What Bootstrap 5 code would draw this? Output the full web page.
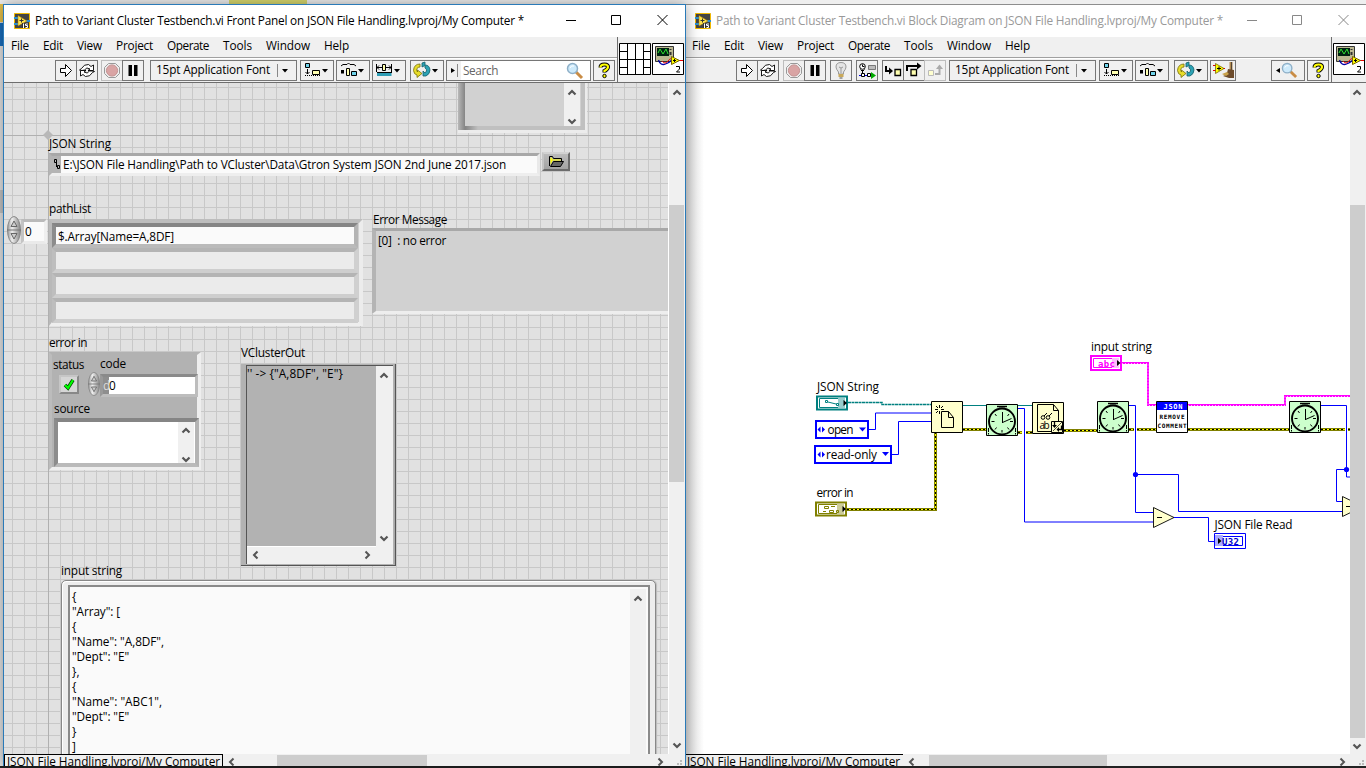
<!DOCTYPE html>
<html lang="en">
<head>
<meta charset="utf-8">
<meta name="viewport" content="width=device-width, initial-scale=1">
<title>Path to Variant Cluster Testbench.vi</title>
<link href="https://cdn.jsdelivr.net/npm/bootstrap@5.3.0/dist/css/bootstrap.min.css" rel="stylesheet">
<style>
html,body{height:100%;overflow:hidden}
body{font:11.8px/15px "Open Sans","Noto Sans",sans-serif;color:#000;background:#efefef;width:1366px;height:768px}
svg{display:block;flex:none}
svg text{font-family:"Open Sans","Noto Sans",sans-serif;font-size:11.8px;fill:#000}
[data-w]{display:inline-block;white-space:pre;flex:none}
.desktop{height:766px;background:linear-gradient(#d9d96f,#d9d96f) 229px 0/78px 4px no-repeat,#efefef}
.strip{width:3px;background:linear-gradient(#e9c24a 0 18px,#d8d8d8 18px 19px,#1a6fbf 19px 42px,#e4e4e4 42px 186px,#c4c4c4 186px 209px,#e4e4e4 209px)}
.taskbar{height:2px;background:#222}
.win-front{width:683px;border:1px solid #2a7ab8;border-bottom:0;z-index:2;box-shadow:0 0 14px rgba(0,0,0,.38)}
.win-back{width:680px;border-top:1px solid #8e8e8e}
.titlebar{height:32px;background:#fff;padding-left:10px}
.titlebar .caption-txt{margin-left:5px;margin-top:-2px}
.titlebar .lvicon{margin-top:-1px}
.win-back .titlebar{padding-left:9px;color:#999}
.bars{height:46px;background:#f0f0f0;border-bottom:1px solid #6e6e6e}
.menus{height:21px;gap:14px;padding-left:7px;padding-bottom:4px;border-bottom:1px solid #a0a0a0;box-shadow:0 1px #fff}
.win-back .menus{padding-left:6px}
.tools{height:24px;padding-top:2px}
.tb{height:21px;width:22px;border:1px solid #767676;background:#f0f0f0;padding:0;display:flex;align-items:center;margin-right:-1px}
.tb.dim{border-color:#bdbdbd}
.tb.w34{width:34px}.tb.w26{width:26px}
.fontbox{width:147px;padding-left:5px}
.fontbox span{margin-top:-2px}
.searchbox{width:145px;color:#666;background:#fff}
.iconpane{border-left:1px solid #6e6e6e;padding:6px 0 0 1px;gap:1px}
.panel{width:664px;background-color:#e1e1e1;background-image:linear-gradient(#b0b0b0,#b0b0b0),linear-gradient(#b0b0b0,#b0b0b0),linear-gradient(90deg,#c8c8c8 1px,transparent 1px),linear-gradient(#c8c8c8 1px,transparent 1px);background-size:1px 100%,100% 1px,12px 12px,12px 12px;background-position:44px 0,0 52px,8px 4px,8px 4px;background-repeat:no-repeat,no-repeat,repeat,repeat}
.workarea{height:671px}
.origin{position:absolute;left:-4px;top:-83px;width:700px;height:768px}
.origin>*{position:absolute}
.vbar{width:17px;border-left:1px solid #fff;background:#f0f0f0}
.win-back .vbar{border-left:0}
.vbar .track{padding-top:6px}
.thumb1{height:277px;margin-top:109px;width:15px;background:#cdcdcd}
.thumb2{height:533px;margin-top:109px;width:15px;background:#cdcdcd}
.statusbar{height:12px;background:#f0f0f0;overflow:hidden}
.status-name{border:1px solid #000;border-bottom:0;height:16px;width:219px;padding-left:2px;line-height:13px}
.win-back .status-name{width:217px;border-left:0;border-right:0;padding-left:1px}
.hthumb{height:12px;background:#cdcdcd;margin-top:1px}
/* front panel controls */
.bevel{border:3px solid;border-color:#a8a8a8 #e9e9e9 #eeeeee #b4b4b4}
.dark{border:4px solid;border-color:#858585 #b4b4b4 #bababa #8c8c8c}
.ro{border:4px solid;border-color:#b4b4b4 #d0d0d0 #cecece #bebebe;background:#ebebeb}
.o-topbox{left:458px;top:60px;width:127px;height:70px;border:solid;border-width:5px 4px 4px 7px;border-color:#999 #bdbdbd #c6c6c6 #969696;border-image:linear-gradient(90deg,#b8b8b8,#858585 7px,#c0c0c0 20px) 5 4 4 7;background:#d1d1d1;box-shadow:1px 2px 0 1px #ececec}
.sb{background:#f0f0f0;width:16px}
.o-path{left:49px;top:153px;width:491px;height:23px;background:#fafafa}
.o-path .glyph{width:9px;height:17px;background:#b4b4b4}
.o-browse{left:542px;top:152px;width:28px;height:19px;border:2px solid;border-color:#d2d2d2 #6c6c6c #6c6c6c #c4c4c4;background:linear-gradient(#bbb,#a3a3a3);padding:0}
.o-index{left:21px;top:219px;width:26px;height:25px;border-color:#bababa #efefef #eaeaea #c4c4c4;background:#fafafa;padding-left:1px;line-height:19px}
.o-spin1{left:7px;top:216px}
.o-array{left:49px;top:219px;width:314px;height:107px;border-color:#bdbdbd #ececec #eee #b9b9b9;background:#cfcfcf;border-width:4px 4px 4px 3px}
.o-array .cell{height:25px}
.o-array .cell{margin-right:1px}
.o-array .dark{background:#fafafa;line-height:18px}
.o-errmsg{left:372px;top:228px;width:320px;height:86px;background:#d1d1d1;border-left-width:4px;padding:2px}
.o-cluster{left:49px;top:352px;width:152px;height:118px;background:#b2b2b2;border-color:#b2b2b2 #eee #eee #bcbcbc;border-right-width:4px}
.l-json{left:49px;top:136px}
.l-pathlist{left:49px;top:201px}
.l-errmsg{left:373px;top:212px}
.l-errin{left:49px;top:335px}
.l-status{left:53px;top:357px}.l-code{left:100px;top:356px}.l-source{left:54px;top:401px}
.l-vc{left:241px;top:345px}
.l-input{left:61px;top:563px}
.o-check{left:59px;top:375px;width:20px;height:19px;border:2px solid;border-color:#c6c6c6 #888 #888 #c6c6c6;background:#d6d6d6}
.o-spin2{left:88px;top:372px}
.o-num{left:100px;top:374px;width:98px;height:23px;border-width:3px;border-color:#8a8a8a #bdbdbd #bdbdbd #999;background:#fff;line-height:17px}
.o-num .radix{width:6px;height:17px;background:#8e8e8e;color:#ddd}
.o-source{left:54px;top:418px;width:145px;height:49px;background:#fff}
.o-vc{left:241px;top:364px;width:155px;height:202px;background:#b2b2b2;border-bottom:1px solid #555;border-right:1px solid #555;padding:1px 2px 0 5px;box-shadow:inset -1px 0 #aaa}
.o-vc .inner{height:199px;border:solid #555;border-width:1px 0 0 1px;background:#f0f0f0}
.o-vc .txt{width:129px;height:181px;background:#b2b2b2;border-bottom:1px solid #fff;line-height:15px}
.o-input{left:61px;top:580px;width:595px;height:190px;border:1px solid #888;border-radius:5px;background:#ededed;box-shadow:inset 1px 1px #fff,1px 0 1px #bbb;padding:4px 5px 0 6px}
.o-input .inner{height:190px;border:2px solid #8a8a8a;background:#fafafa;padding:2px 0 0 2px}
.o-input .inner .sb{height:180px;margin-right:2px}
.origin>.lbl{line-height:15px}
.diagram{width:664px;background:linear-gradient(90deg,#ddd,#fff 18px)}
</style>
</head>
<body>
<svg width="0" height="0" class="position-absolute">
<defs>
<symbol id="lv" viewBox="0 0 16 16"><path fill="#444" stroke="#f0b800" d="M.5.5h15v15H.5z"/><path d="M0 5h4M0 11h4M12 8h4" stroke="#2b8fd0" stroke-width="2"/><path fill="#ffe34d" stroke="#a87800" stroke-width=".5" d="M4 2.500 13 8 4 13z"/><path d="M5.500 7.500h4M7.500 5.500v4" stroke="#333"/><path d="M8 10h7v5H8z" fill="#333"/><path d="M9.500 10.500V15M14 11h-2.500v1.500H13.500V14.500H11.500" stroke="#fff" fill="none"/></symbol>
<symbol id="run" viewBox="0 0 20 19"><path fill="#fff" stroke="#000" d="M4.500 7.500h5v-4l6 6-6 6v-4h-5z"/></symbol>
<symbol id="cont" viewBox="0 0 20 19"><g fill="#fff" stroke="#000" stroke-width=".9"><path d="M4.500 7.500Q7 3 11.500 3.500l2.500 2 2.500-1.500v5.500h-5.500l2-1.500q-3.500-2.500-5.500 1L5 9.500 2.500 9z"/><path d="M15.500 11.500q-2.500 4.500-7 4l-2.500-2-2.500 1.500V9.500h5.500l-2 1.500q3.500 2.500 5.500-1l2.500 0 2.500.5z"/></g></symbol>
<symbol id="abort" viewBox="0 0 20 19"><path fill="#efefef" stroke="#999" d="M6.500 2.500h7l4 4v6l-4 4h-7l-4-4v-6z"/><circle cx="10" cy="9.500" r="5.600" fill="#d9a4a4" stroke="#c49292"/></symbol>
<symbol id="pause" viewBox="0 0 20 19"><path d="M5.500 4h3.500v11H5.500zM11 4h3.500v11H11z"/></symbol>
<symbol id="align" viewBox="0 0 32 19"><path d="M4.500 2.500h4v4h-4z" fill="#6fd3ea" stroke="#000"/><path d="M6.500 8v5M4.500 11l2 2 2-2" fill="none" stroke="#000"/><path d="M4 14.500h15" stroke="#000" stroke-dasharray="1 1"/><path d="M11.500 9.500h7v4h-7z" fill="#ffffb0" stroke="#000"/><path d="M21 8h6l-3 3.500z"/></symbol>
<symbol id="dist" viewBox="0 0 32 19"><path d="M4 5l2-1.500h4l1.500-1.500 1.500 1.500h4l2 1.500" fill="none" stroke="#000"/><path d="M4 9h3v3.500H4z"/><path d="M9.500 7.500h3v7h-3z" fill="#ffffb0" stroke="#000"/><path d="M14.500 10.500h5v4h-5z" fill="#6fd3ea" stroke="#000"/><path d="M21 8h6l-3 3.500z"/></symbol>
<symbol id="resize" viewBox="0 0 32 19"><path d="M3.500 3v8M18.500 3v8M3 6.500h16M6 4.500l-2 2 2 2M16 4.500l2 2-2 2" fill="none" stroke="#000"/><path d="M9.500 3.500h3v6h-3z" fill="#ffffb0" stroke="#000"/><path d="M4 12h14.500v3H4z" fill="#2f9db5"/><path d="M4 11.500h15" stroke="#000"/><path d="M21 8h6l-3 3.500z"/></symbol>
<symbol id="reorder" viewBox="0 0 32 19"><path d="M9 3Q3 3 2.500 9.500 3 13.500 6 14v2.500l5-4L6.500 9v2Q5 9 6 7.500 7 6 9 6z" fill="#e7dc29" stroke="#77700a" stroke-width=".8"/><path d="M11 2v4l3-1.500V7q2 1 1.500 3L14 12l-2-2v5h3q4-2 4-6-.5-5-5-5V1z" fill="#2ca3b5" stroke="#145e6a" stroke-width=".8"/><path d="M21 8h6l-3 3.500z"/></symbol>
<symbol id="mag" viewBox="0 0 18 18"><path d="m10 10 6 6" stroke="#c98c45" stroke-width="3"/><circle cx="6.500" cy="6.500" r="5" fill="#cdeafb" stroke="#8fb0c8" stroke-width="1.500"/><path d="M4 6q1-3 4-2" stroke="#fff" fill="none"/></symbol>
<symbol id="help" viewBox="0 0 20 19"><path d="M6.500 6.500q0-3 4-3 3.500 0 3.500 2.500 0 2-3.500 4v1.500" fill="none" stroke="#000" stroke-width="4"/><path d="M6.500 6.500q0-3 4-3 3.500 0 3.500 2.500 0 2-3.500 4v1" fill="none" stroke="#ff0" stroke-width="2.200"/><circle cx="10.500" cy="15" r="1.700" fill="#ff0" stroke="#000"/></symbol>
<symbol id="conn" viewBox="0 0 32 32"><path fill="#fff" stroke="#000" d="M.5.500h31v31H.5zM8.500.500v31M16.500.500v31M24.500.500v31M0 16.500h32M0 8.500h8M0 24.500h8M24 8.500h8M24 24.500h8"/></symbol>
<symbol id="vi" viewBox="0 0 32 32"><path fill="#fff" stroke="#000" d="M.5.500h31v31H.5z"/><path fill="#bcb892" stroke="#333" d="M3.500 3.500h18v15h-18z"/><path fill="#021" d="M5 5h12v8H5z"/><path d="M6 10l2-4 3 5 3-5 2 5" fill="none" stroke="#2fe02f"/><path d="M18.500 6v1M18.500 9v3" stroke="#333" stroke-width="2"/><path d="M6.500 17q2 6 7 4t6-4" fill="none" stroke="#00a" stroke-width="1.300"/><path d="M10 18q3 4 6 0t4-1M26 17.500h5" fill="none" stroke="#e00"/><path fill="#ff0" stroke="#760" d="M19.500 13.500l8 4-8 4z"/><path d="M21 17.500h3M22.500 16v3" stroke="#000"/><path d="M24 23.500h3.500v2.500l-3 3H28" fill="none" stroke="#000" stroke-width="1"/></symbol>
<symbol id="bulb" viewBox="0 0 20 19"><path d="M10 1.500q5 0 5 4.500 0 2-2.500 5v2h-5v-2Q5 8 5 6q0-4.500 5-4.500z" fill="#e4e4e4" stroke="#999"/><path d="M8 6l2 1 2-1M10 7v5" stroke="#999" fill="none"/><path d="M7.500 13h5v3h-5z" fill="#c8a85a"/><path d="M8.500 17h3" stroke="#555"/></symbol>
<symbol id="retain" viewBox="0 0 20 19"><circle cx="5.500" cy="5.500" r="2.800" fill="#fff" stroke="#000"/><path d="M5.500 3.500v2h2M3.500 8.500l2 2 2-2M5.500 9v4" stroke="#000" fill="none"/><path d="M11.500 4.500h7v4h-7z" fill="#bbb" stroke="#777"/><path d="M2 14.500h3M8 14.500h6" stroke="#00d"/><path d="M4.500 12.500h3v3h-3zM10.500 12.500h3v3h-3z" fill="#fff" stroke="#000"/><path d="M14 11l5 3.500-5 3.500z" fill="#0a0"/></symbol>
<symbol id="into" viewBox="0 0 20 19"><path d="M3 5v5h5" fill="none" stroke="#000" stroke-width="2"/><path d="M6 6.500l4 3.500-4 3.500z"/><path d="M12 8.500h5.500v6H12z" fill="#ffffb0" stroke="#000" stroke-width="1.300"/></symbol>
<symbol id="over" viewBox="0 0 20 19"><path d="M3 10V5h12" fill="none" stroke="#000" stroke-width="2"/><path d="M13 1.500l4.500 3.500-4.500 3.500z"/><path d="M7 8.500h5.500v6H7z" fill="#ffffb0" stroke="#000" stroke-width="1.300"/></symbol>
<symbol id="out" viewBox="0 0 20 19"><path d="M3.500 9.500h5v5h-5z" fill="#ffffcf" stroke="#bbb"/><path d="M10 13h4.500V7" fill="none" stroke="#aaa" stroke-width="2"/><path d="M11 8l3.500-4.500L18 8z" fill="#aaa"/></symbol>
<symbol id="clean" viewBox="0 0 24 19"><path d="M2 4.500h4M2 9.500h4M11 7.500h3" stroke="#d00"/><path fill="#ff0" stroke="#650" stroke-width=".7" d="M4.500 2.500l8.500 5-8.500 5z"/><path d="M6 7.500h4M8 5.500v4" stroke="#000"/><path d="M20 1v8" stroke="#b08a50" stroke-width="3"/><path d="M20.500 1v8" stroke="#543"/><path d="M17 8l6 1v8h-5l-6-2q4-1 5-7z" fill="#6d4c2c"/><path d="M11 13l5-2 2 2-3 2z" fill="#c9a24a"/></symbol>
<symbol id="up" viewBox="0 0 10 7"><path d="M1.500 5.500 5 2l3.500 3.500" fill="none" stroke="#555" stroke-width="2.200"/></symbol>
<symbol id="dn" viewBox="0 0 10 7"><path d="M1.500 1.500 5 5l3.500-3.500" fill="none" stroke="#555" stroke-width="2.200"/></symbol>
<symbol id="lt" viewBox="0 0 7 10"><path d="M5.500 1.500 2 5l3.500 3.500" fill="none" stroke="#555" stroke-width="2"/></symbol>
<symbol id="rt" viewBox="0 0 7 10"><path d="M1.500 1.500 5 5 1.500 8.500" fill="none" stroke="#555" stroke-width="2"/></symbol>
<symbol id="spin" viewBox="0 0 14 28"><ellipse cx="7" cy="14" rx="6.500" ry="13.500" fill="url(#sg)" stroke="#888"/><path d="M0 14h14" stroke="#777"/><path d="M4 10.500 7 5l3 5.500zM4 17.500h6L7 23z" fill="#ccc" stroke="#666"/></symbol>
<linearGradient id="sg"><stop offset="0" stop-color="#999"/><stop offset=".35" stop-color="#eee"/><stop offset="1" stop-color="#858585"/></linearGradient>
<symbol id="clock" viewBox="0 0 32 32"><path fill="#cfc" stroke="#000" d="M.5.500h31v31H.5z"/><path d="M11 2.500h10M13 4.500h6" stroke="#000" stroke-width="1.500"/><circle cx="16" cy="17.500" r="13" fill="#cfc" stroke="#000" stroke-width="1.900"/><path d="M16.500 8v11M16.500 18.500l9-4M16 26v2.500M5.500 17.500h3M24 17.500h3M9 10l1.500 2M23 10l-1.500 2M9 25.500l1.500-2M23 25.500l-1.500-2M2.500 24v4M29.500 24v4M2.500 29v1.500M29.500 29v1.500" stroke="#000" fill="none"/></symbol>
</defs>
</svg>

<div class="desktop d-flex pt-1">
  <div class="strip"></div>

  <section class="win-front position-relative d-flex flex-column bg-white">
    <header class="titlebar d-flex align-items-center position-relative">
      <svg class="lvicon" width="16" height="16"><use href="#lv"/></svg>
      <span class="caption-txt" data-w="489">Path to Variant Cluster Testbench.vi Front Panel on JSON File Handling.lvproj/My Computer *</span>
      <svg class="ms-auto" width="122" height="32"><path d="M3 15.500h10M48.500 10.500h9v9h-9zM94.500 10l10 10M104.500 10l-10 10" fill="none" stroke="#000"/></svg>
    </header>
    <div class="bars d-flex">
      <div class="flex-grow-1">
        <nav class="menus d-flex align-items-center">
          <span data-w="18">File</span><span data-w="20">Edit</span><span data-w="25">View</span><span data-w="37">Project</span><span data-w="42">Operate</span><span data-w="29">Tools</span><span data-w="44">Window</span><span data-w="25">Help</span>
        </nav>
        <div class="tools d-flex" style="padding-left:51px">
          <button class="tb"><svg width="20" height="19"><use href="#run"/></svg></button>
          <button class="tb"><svg width="20" height="19"><use href="#cont"/></svg></button>
          <button class="tb dim ms-1"><svg width="20" height="19"><use href="#abort"/></svg></button>
          <button class="tb"><svg width="20" height="19"><use href="#pause"/></svg></button>
          <button class="tb fontbox" style="margin-left:7px"><span data-w="114">15pt Application Font</span><svg width="26" height="19"><path d="M7.500 3v13" stroke="#888"/><path d="M12 8h6l-3 3.500z"/></svg></button>
          <button class="tb w34" style="margin-left:4px"><svg width="32" height="19"><use href="#align"/></svg></button>
          <button class="tb w34" style="margin-left:3px"><svg width="32" height="19"><use href="#dist"/></svg></button>
          <button class="tb w34" style="margin-left:3px"><svg width="32" height="19"><use href="#resize"/></svg></button>
          <button class="tb w34" style="margin-left:5px"><svg width="32" height="19"><use href="#reorder"/></svg></button>
          <div class="tb searchbox" style="margin-left:3px"><svg width="15" height="19"><path d="M0 0h14v19H0z" fill="#f0f0f0"/><path d="M4 7l4 2.500L4 12z"/><path d="M10.500 3v13" stroke="#888"/></svg><span data-w="35" style="margin-left:1px">Search</span><svg class="ms-auto" style="margin-right:6px" width="18" height="18"><use href="#mag"/></svg></div>
          <button class="tb" style="margin-left:3px"><svg width="20" height="19"><use href="#help"/></svg></button>
        </div>
      </div>
      <div class="iconpane d-flex" style="width:68px"><svg width="32" height="32"><use href="#conn"/></svg><svg width="32" height="32"><use href="#vi"/></svg></div>
    </div>
    <div class="workarea d-flex">
      <main class="panel position-relative overflow-hidden">
        <div class="origin">
          <svg style="left:43px;top:130px" width="10" height="10"><path d="M5 0l5 5-5 5-5-5z" fill="#b8b8b8"/></svg>
          <div class="o-topbox d-flex justify-content-end"><div class="sb d-flex flex-column justify-content-between align-items-center" style="padding:24px 0 1px;margin-right:1px"><svg width="10" height="7"><use href="#up"/></svg><svg width="10" height="7"><use href="#dn"/></svg></div></div>
          <span class="l-json lbl" data-w="62">JSON String</span>
          <div class="o-path bevel d-flex align-items-center"><div class="glyph"><svg width="9" height="17"><path d="M2.500 3.500h2v3h-2zM5.500 9.500h2v3h-2zM4.500 5v6" fill="none" stroke="#000"/></svg></div><span data-w="443" style="margin-left:2px">E:\JSON File Handling\Path to VCluster\Data\Gtron System JSON 2nd June 2017.json</span></div>
          <button class="o-browse"><svg width="24" height="15"><path d="M5.500 12V2.500h3l1 2h8v3" fill="none" stroke="#000"/><path d="M6.500 11V3.500h1l1 2h8v1h-8z" fill="#ff0"/><path d="M6.500 12.500l3-5h10l-3 5z" fill="#666" stroke="#000"/></svg></button>
          <span class="l-pathlist lbl" data-w="42">pathList</span>
          <div class="o-index bevel"><span data-w="8">0</span></div>
          <svg class="o-spin1" width="14" height="28"><use href="#spin"/></svg>
          <div class="o-array bevel"><div class="cell dark"><span data-w="116" style="margin-left:2px">$.Array[Name=A,8DF]</span></div><div class="cell ro"></div><div class="cell ro"></div><div class="cell ro"></div></div>
          <span class="l-errmsg lbl" data-w="74">Error Message</span>
          <div class="o-errmsg bevel"><span data-w="68">[0]  : no error</span></div>
          <span class="l-errin lbl" data-w="38">error in</span>
          <div class="o-cluster bevel"></div>
          <span class="l-status lbl" data-w="31">status</span><span class="l-code lbl" data-w="26">code</span>
          <div class="o-check"><svg width="16" height="15"><path d="M4 8l3 3 5-8" fill="none" stroke="#040" stroke-width="3.600"/><path d="M4 8l3 3 5-8" fill="none" stroke="#0f0" stroke-width="2.200"/></svg></div>
          <div class="o-num dark d-flex"><span class="radix" data-w="6">d</span><span data-w="8" class="ms-0">0</span></div>
          <svg class="o-spin2" width="12" height="24"><use href="#spin"/></svg>
          <span class="l-source lbl" data-w="36">source</span>
          <div class="o-source dark d-flex justify-content-end"><div class="sb d-flex flex-column justify-content-between align-items-center" style="padding:5px 0 0;margin-right:1px"><svg width="10" height="7"><use href="#up"/></svg><svg width="10" height="7"><use href="#dn"/></svg></div></div>
          <span class="l-vc lbl" data-w="64">VClusterOut</span>
          <div class="o-vc"><div class="inner"><div class="d-flex"><div class="txt"><span data-w="96">'' -&gt; {"A,8DF", "E"}</span></div><div class="sb d-flex flex-column justify-content-between align-items-center" style="padding:6px 0 5px"><svg width="10" height="7"><use href="#up"/></svg><svg width="10" height="7"><use href="#dn"/></svg></div></div><div class="d-flex justify-content-between" style="width:129px;padding:3px 5px"><svg width="7" height="10"><use href="#lt"/></svg><svg width="7" height="10"><use href="#rt"/></svg></div></div></div>
          <span class="l-input lbl" data-w="61">input string</span>
          <div class="o-input"><div class="inner d-flex justify-content-between"><div class="d-flex flex-column align-items-start"><span data-w="4">{</span><span data-w="48">"Array": [</span><span data-w="4">{</span><span data-w="92">"Name": "A,8DF",</span><span data-w="57">"Dept": "E"</span><span data-w="7">},</span><span data-w="4">{</span><span data-w="90">"Name": "ABC1",</span><span data-w="57">"Dept": "E"</span><span data-w="4">}</span><span data-w="4">]</span></div><div class="sb"><svg width="10" height="7" style="margin:6px 0 0 3px"><use href="#up"/></svg></div></div></div>
        </div>
      </main>
      <div class="vbar"><div class="track"><svg width="16" height="7"><use href="#up" width="10" height="7" x="3"/></svg></div><div class="thumb1"></div><svg width="16" height="7" style="margin-top:260px"><use href="#dn" width="10" height="7" x="3"/></svg></div>
    </div>
    <footer class="statusbar d-flex"><div class="status-name"><span data-w="213">JSON File Handling.lvproj/My Computer</span></div><svg width="54" height="12"><use href="#lt" x="5" y="3" width="7" height="10"/></svg><div class="hthumb" style="width:150px"></div><svg class="ms-auto" width="30" height="12"><use href="#rt" x="2" y="3" width="7" height="10"/><path d="M25 7h2M25 10h2M22 10h2" stroke="#bbb" stroke-width="2"/></svg></footer>
  </section>

  <section class="win-back d-flex flex-column bg-white">
    <header class="titlebar d-flex align-items-center">
      <svg class="lvicon" width="16" height="16"><use href="#lv"/></svg>
      <span class="caption-txt" data-w="507">Path to Variant Cluster Testbench.vi Block Diagram on JSON File Handling.lvproj/My Computer *</span>
      <svg class="ms-auto" width="122" height="32"><path d="M3 15.500h10M48.500 10.500h9v9h-9zM94.500 10l10 10M104.500 10l-10 10" fill="none" stroke="#888"/></svg>
    </header>
    <div class="bars d-flex">
      <div class="flex-grow-1">
        <nav class="menus d-flex align-items-center">
          <span data-w="18">File</span><span data-w="20">Edit</span><span data-w="25">View</span><span data-w="37">Project</span><span data-w="42">Operate</span><span data-w="29">Tools</span><span data-w="44">Window</span><span data-w="25">Help</span>
        </nav>
        <div class="tools d-flex" style="padding-left:50px">
          <button class="tb"><svg width="20" height="19"><use href="#run"/></svg></button>
          <button class="tb"><svg width="20" height="19"><use href="#cont"/></svg></button>
          <button class="tb dim" style="margin-left:5px"><svg width="20" height="19"><use href="#abort"/></svg></button>
          <button class="tb"><svg width="20" height="19"><use href="#pause"/></svg></button>
          <button class="tb" style="margin-left:5px"><svg width="20" height="19"><use href="#bulb"/></svg></button>
          <button class="tb" style="margin-left:5px"><svg width="20" height="19"><use href="#retain"/></svg></button>
          <button class="tb" style="margin-left:5px"><svg width="20" height="19"><use href="#into"/></svg></button>
          <button class="tb"><svg width="20" height="19"><use href="#over"/></svg></button>
          <button class="tb dim"><svg width="20" height="19"><use href="#out"/></svg></button>
          <button class="tb fontbox" style="margin-left:4px"><span data-w="114">15pt Application Font</span><svg width="26" height="19"><path d="M7.500 3v13" stroke="#888"/><path d="M12 8h6l-3 3.500z"/></svg></button>
          <button class="tb w34" style="margin-left:4px"><svg width="32" height="19"><use href="#align"/></svg></button>
          <button class="tb w34" style="margin-left:3px"><svg width="32" height="19"><use href="#dist"/></svg></button>
          <button class="tb w34" style="margin-left:6px"><svg width="32" height="19"><use href="#reorder"/></svg></button>
          <button class="tb w26" style="margin-left:3px"><svg width="24" height="19"><use href="#clean"/></svg></button>
          <button class="tb w34" style="margin-left:36px"><svg width="32" height="19"><path d="M8 7l-4 2.500L8 12z"/><use href="#mag" x="9" y="1" width="17" height="17"/></svg></button>
          <button class="tb" style="margin-left:3px"><svg width="20" height="19"><use href="#help"/></svg></button>
        </div>
      </div>
      <div class="iconpane d-flex" style="width:35px"><svg width="32" height="32"><use href="#vi"/></svg></div>
    </div>
    <div class="workarea d-flex">
      <main class="diagram">
        <svg width="664" height="671" viewBox="686 83 664 671">
          <g fill="none" stroke="#00f">
            <path d="M869 429.500h6.500v-16.500H931M892 454.500h6.500v-33H931M1018 408.500h6.500v113.500H1153M1129 405.500h6.500v107H1153M1135.500 474.500h43v37H1342M1321 405.500h25.500v71.500H1350M1346.500 469.500h-10v32H1342M1174 517.500h34.500v24H1214"/>
          </g>
          <path d="M848 402.500h34v2h49" fill="none" stroke="#008080" stroke-width="1.500" stroke-dasharray="3 .5"/>
          <path d="M963 405.500h23M1018 405.500h14" stroke="#008080"/>
          <g fill="none" stroke="#f0f" stroke-width="2"><path d="M1122 363h26v42h8M1188 405h97v-9h65"/></g>
          <g fill="none" stroke="#fff" stroke-width="1" stroke-dasharray="1 2" opacity=".7"><path d="M1122 363.500h26v42h8M1188 405.500h97v-9h65"/></g>
          <path d="M847 509.500h88.500v-77M963 429.500h23M1018 432.500h4M1026 432.500h6M1064 430.500h33M1129 429.500h5M1137 429.500h19M1188 429.500h101M1321 429.500h24M1348 429.500h2" fill="none" stroke="#808000" stroke-width="3"/>
          <path d="M847 509.500h88.500v-77M963 429.500h23M1018 432.500h4M1026 432.500h6M1064 430.500h33M1129 429.500h5M1137 429.500h19M1188 429.500h101M1321 429.500h24M1348 429.500h2" fill="none" stroke="#ff0"/>
          <path d="M847 509.500h88.500v-77M963 429.500h23M1018 432.500h4M1026 432.500h6M1064 430.500h33M1129 429.500h5M1137 429.500h19M1188 429.500h101M1321 429.500h24M1348 429.500h2" fill="none" stroke="#000" stroke-dasharray="2 2"/>
          <circle cx="1135.500" cy="474.500" r="2.600" fill="#00f"/><circle cx="1346.500" cy="469.500" r="2.600" fill="#00f"/>

          <text x="817" y="391" textLength="62">JSON String</text>
          <path d="M817 396.500h30v13h-30z" fill="#fff" stroke="#008080" stroke-width="2"/><path d="M819.500 398.500h25v9h-25z" fill="#fff" stroke="#008080"/><path d="M838 398h7v10h-7z" fill="#9cc"/><path d="M825.500 400.500h2v2h-2zM836.500 403.500h2v2h-2zM828 402l8 2" fill="none" stroke="#008080"/><path d="M843.500 400l3.500 3-3.500 3z"/>
          <path d="M816 421h52v17h-52zM815 446h76v17h-76z" fill="#fff" stroke="#00f" stroke-width="2"/>
          <path d="M820.500 426.500v6l-3-3zM822 426.500l3 3-3 3zM859 427.500h7l-3.500 4zM820.500 451.500v6l-3-3zM822 451.500l3 3-3 3zM882 452h7l-3.500 4z" fill="#00f"/>
          <text x="827.500" y="434" textLength="26">open</text><text x="826" y="459" textLength="51">read-only</text>
          <text x="816.500" y="497" textLength="37">error in</text>
          <path d="M816 502.500h30v13h-30z" fill="#fff" stroke="#808000" stroke-width="2"/><path d="M818.500 504.500h25v9h-25z" fill="#fff" stroke="#808000"/><path d="M837 504h7v10h-7z" fill="#cc9"/><path d="M824.500 506.500h4v2h-4zM831 506.500h4M823 511.500h3M829.500 510.500h4v2h-4zM836.500 510.500h2v2h-2z" fill="none" stroke="#808000"/><path d="M842.500 506l3.500 3-3.500 3z"/>

          <path d="M931.500 401.500h31v31h-31z" fill="#ffc" stroke="#000"/><path d="M941.500 411.500h7l5 6v10h-12zM948.500 411.500v6h5M939.500 405v3M939.500 411v3M935 409.500h3M941 409.500h3M936 406l2 2M943 406l-2 2M936 413l2-2" fill="none" stroke="#000"/>
          <use href="#clock" x="986" y="404" width="32" height="32"/>
          <path d="M1032.500 402.500h31v31h-31z" fill="#ffc" stroke="#000"/><path d="M1037.500 404.500h16l5 6v21h-21zM1053.500 404.500v6h5" fill="none" stroke="#000"/><circle cx="1043" cy="417.500" r="1.800" fill="none" stroke="#000"/><circle cx="1048" cy="417.500" r="1.800" fill="none" stroke="#000"/><path d="M1044 416l3-3M1049 416l3-3" stroke="#000"/><text x="1039.500" y="428.500" textLength="10" style="font-size:10px">ab</text><path d="M1051.500 421.500h11v11h-11z" fill="#ffc" stroke="#000"/><path d="M1053 431l9-9" stroke="#000" stroke-width=".7"/><path d="M1054.500 422v4M1058 429.500h3.500v-4" stroke="#000" stroke-width="1.300" fill="none"/><path d="M1052 425h5l-2.500 3zM1056.500 429.500l2.500-2.500v5z"/>
          <use href="#clock" x="1097" y="401" width="32" height="32"/>
          <use href="#clock" x="1289" y="401" width="32" height="32"/>

          <text x="1091" y="351" textLength="61">input string</text>
          <path d="M1091 356h30v14h-30z" fill="#fff" stroke="#f0f" stroke-width="2"/><path d="M1093.500 358.500h25v9h-25z" fill="#fff" stroke="#f0f"/><path d="M1112 358h7v10h-7z" fill="#fbf"/><text x="1098" y="366.500" textLength="17" style="font:bold 9px 'DejaVu Sans Mono',monospace;fill:#f0f">abc</text><path d="M1117 360l3.500 3-3.500 3z"/>
          <path d="M1156.500 401.500h31v31h-31z" fill="#fff" stroke="#000"/><path d="M1157 402h30v8h-30z" fill="#00f"/>
          <text x="1163.500" y="409" textLength="19" style="font:bold 7px 'DejaVu Sans Mono',monospace;fill:#fff">JSON</text>
          <text x="1159.500" y="419" textLength="25" style="font:bold 6px 'DejaVu Sans Mono',monospace">REMOVE</text>
          <text x="1157.500" y="428" textLength="29" style="font:bold 6px 'DejaVu Sans Mono',monospace">COMMENT</text>
          <path d="M1153.500 507.500l20.500 10-20.500 10zM1342.500 496.500l20.500 10-20.500 10z" fill="#ffc" stroke="#000" stroke-width=".9"/><path d="M1157 517.500h5M1346 506.500h4" stroke="#000"/>
          <text x="1214.500" y="529" textLength="78">JSON File Read</text>
          <path d="M1214.500 533.500h31v15h-31z" fill="#fff" stroke="#00f"/><path d="M1217.500 536.500h25v9h-25z" fill="#fff" stroke="#00f"/><path d="M1215 535h8v11h-8z" fill="#aaf"/><path d="M1218 538l3.500 3-3.500 3z"/><text x="1222" y="544.500" textLength="17" style="font:bold 9px 'DejaVu Sans Mono',monospace;fill:#00c">U32</text>
        </svg>
      </main>
      <div class="vbar" style="width:16px"><div class="track"><svg width="15" height="7"><use href="#up" width="10" height="7" x="2"/></svg></div><div class="thumb2"></div><svg width="15" height="7" style="margin-top:5px"><use href="#dn" width="10" height="7" x="2"/></svg></div>
    </div>
    <footer class="statusbar d-flex"><div class="status-name"><span data-w="213">JSON File Handling.lvproj/My Computer</span></div><svg width="26" height="12"><use href="#lt" x="5" y="3" width="7" height="10"/></svg><div class="hthumb" style="width:178px"></div><svg class="ms-auto" width="30" height="12"><use href="#rt" x="3" y="3" width="7" height="10"/><path d="M26 7h2M26 10h2M23 10h2" stroke="#bbb" stroke-width="2"/></svg></footer>
  </section>
</div>
<div class="taskbar"></div>
<script src="https://cdn.jsdelivr.net/npm/bootstrap@5.3.0/dist/js/bootstrap.bundle.min.js"></script>
<script>
// Give each label its nominal width by spreading the difference over its letters.
document.querySelectorAll('[data-w]').forEach(function (el) {
  var w = +el.dataset.w, n = el.textContent.length;
  var r = document.createRange();
  r.selectNodeContents(el);
  var natural = r.getBoundingClientRect().width;
  if (n > 2) el.style.letterSpacing = (w - natural) / n + 'px';
  el.style.width = w + 'px';
});
</script>
</body>
</html>
